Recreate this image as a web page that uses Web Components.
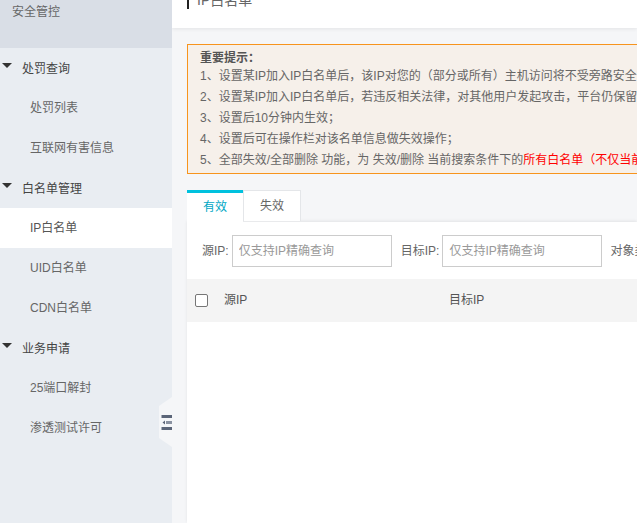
<!DOCTYPE html>
<html lang="zh">
<head>
<meta charset="utf-8">
<title>IP白名单</title>
<style>
    html, body { margin: 0; height: 100%; overflow: hidden; }
    body {
        font: 12px/1.5 "Liberation Sans", "Noto Sans CJK SC", sans-serif;
        color: #666;
    }
</style>
</head>
<body>
<app-shell>
    <side-nav slot="side">
        <nav-item kind="group">处罚查询</nav-item>
        <nav-item>处罚列表</nav-item>
        <nav-item>互联网有害信息</nav-item>
        <nav-item kind="group">白名单管理</nav-item>
        <nav-item active>IP白名单</nav-item>
        <nav-item>UID白名单</nav-item>
        <nav-item>CDN白名单</nav-item>
        <nav-item kind="group">业务申请</nav-item>
        <nav-item>25端口解封</nav-item>
        <nav-item>渗透测试许可</nav-item>
    </side-nav>
    <page-header>IP白名单</page-header>
    <notice-box>
        <p>1、设置某IP加入IP白名单后&#xFF0C;该IP对您的&#xFF08;部分或所有&#xFF09;主机访问将不受旁路安全</p>
        <p>2、设置某IP加入IP白名单后&#xFF0C;若违反相关法律&#xFF0C;对其他用户发起攻击&#xFF0C;平台仍保留</p>
        <p>3、设置后10分钟内生效&#xFF1B;</p>
        <p>4、设置后可在操作栏对该名单信息做失效操作&#xFF1B;</p>
        <p>5、全部失效/全部删除 功能&#xFF0C;为 失效/删除 当前搜索条件下的<span style="color:#f00">所有白名单&#xFF08;不仅当前</span></p>
    </notice-box>
    <tab-bar></tab-bar>
    <list-panel></list-panel>
</app-shell>

<script>
const appShellTemplate = document.createElement("template")
appShellTemplate.innerHTML = `
<style>
    :host { display: flex; width: 100%; height: 100vh; background: #f5f6f8; overflow: hidden; }
    .side { width: 172px; flex: none; }
    .main { flex: 1; min-width: 0; display: flex; flex-direction: column; overflow: hidden; }
</style>
<div class="side"><slot name="side"></slot></div>
<div class="main"><slot></slot></div>`

class AppShell extends HTMLElement {
    constructor() {
        super()
        this.attachShadow({mode: "open"}).append(appShellTemplate.content.cloneNode(true))
    }
}

const sideNavTemplate = document.createElement("template")
sideNavTemplate.innerHTML = `
<style>
    :host { display: block; position: relative; height: 100%; background: #e9edf2; }
    .title { height: 48px; box-sizing: border-box; padding-left: 12px; background: #d9dee6; color: #666; line-height: 24px; }
    .handle { position: absolute; left: 159px; top: 397px; width: 13px; height: 50px; }
    .handle svg { display: block; }
</style>
<div class="title">安全管控</div>
<slot></slot>
<div class="handle">
    <svg width="13" height="50" viewBox="0 0 13 50">
        <polygon points="13,0 13,50 0,41 0,9" fill="#f5f6f8"/>
        <g fill="#5b6578">
            <rect x="2.5" y="18" width="10.5" height="3"/>
            <rect x="2.5" y="30" width="10.5" height="3"/>
        </g>
        <rect x="7" y="24" width="6" height="3" fill="#8a92a1"/>
        <polygon points="3.5,25.5 6,23.5 6,27.5" fill="#5b6578"/>
    </svg>
</div>`

class SideNav extends HTMLElement {
    constructor() {
        super()
        this.attachShadow({mode: "open"}).append(sideNavTemplate.content.cloneNode(true))
    }
}

const navItemTemplate = document.createElement("template")
navItemTemplate.innerHTML = `
<style>
    :host { display: flex; align-items: center; height: 40px; padding-left: 30px; color: #666; }
    :host([active]) { background: #fff; color: #555; }
    :host([kind="group"]) { box-sizing: border-box; padding: 1px 0 0 22px; color: #444; position: relative; }
    .arrow { display: none; position: absolute; left: 2px; top: 15px; width: 0; height: 0;
        border-left: 5px solid transparent; border-right: 5px solid transparent; border-top: 5px solid #333; }
    :host([kind="group"]) .arrow { display: block; }
</style>
<span class="arrow"></span><slot></slot>`

class NavItem extends HTMLElement {
    constructor() {
        super()
        this.attachShadow({mode: "open"}).append(navItemTemplate.content.cloneNode(true))
    }
}

const pageHeaderTemplate = document.createElement("template")
pageHeaderTemplate.innerHTML = `
<style>
    :host { display: block; flex: none; height: 28px; background: #fff; box-shadow: 0 1px 4px rgba(0,0,0,.08); overflow: hidden; position: relative; z-index: 1; }
    h1 { margin: -9px 0 0 15px; padding-left: 8px; border-left: 2px solid #222; font-size: 14px; font-weight: normal; line-height: 18px; color: #666; }
</style>
<h1><slot></slot></h1>`

class PageHeader extends HTMLElement {
    constructor() {
        super()
        this.attachShadow({mode: "open"}).append(pageHeaderTemplate.content.cloneNode(true))
    }
}

const noticeBoxTemplate = document.createElement("template")
noticeBoxTemplate.innerHTML = `
<style>
    :host { display: block; flex: none; box-sizing: border-box; width: 800px; height: 130px; margin: 16px 0 0 15px; padding: 6px 12px 0;
        border: 1px solid #f7941d; background: #f6f0ea; color: #666; white-space: nowrap; }
    strong { display: block; line-height: 15px; color: #555; }
    ::slotted(p) { margin: 0; line-height: 21px; }
</style>
<strong>重要提示&#xFF1A;</strong>
<slot></slot>`

class NoticeBox extends HTMLElement {
    constructor() {
        super()
        this.attachShadow({mode: "open"}).append(noticeBoxTemplate.content.cloneNode(true))
    }
}

const tabBarTemplate = document.createElement("template")
tabBarTemplate.innerHTML = `
<style>
    :host { display: flex; flex: none; margin: 16px 0 0 15px; height: 32px; position: relative; z-index: 1; align-items: flex-start; }
    div { box-sizing: border-box; text-align: center; }
    .on { width: 56px; height: 33px; border-top: 3px solid #00c1de; background: #fff; color: #00a7c4; line-height: 29px; }
    .off { width: 58px; height: 31px; border: 1px solid #e4e6e9; border-bottom: 0; background: #fff; color: #666; line-height: 30px; }
</style>
<div class="on">有效</div>
<div class="off">失效</div>`

class TabBar extends HTMLElement {
    constructor() {
        super()
        this.attachShadow({mode: "open"}).append(tabBarTemplate.content.cloneNode(true))
    }
}

const listPanelTemplate = document.createElement("template")
listPanelTemplate.innerHTML = `
<style>
    :host { display: block; flex: 1; margin-left: 15px; background: #fff; box-shadow: 0 -1px 3px rgba(0,0,0,.08); }
    .filters { display: flex; align-items: center; height: 57px; padding-left: 15px; white-space: nowrap; color: #666; }
    .filters label { display: flex; align-items: center; margin-right: 8px; }
    .filters label:first-child { margin-right: 9px; }
    .filters span { margin-right: 3px; }
    input { width: 160px; height: 32px; box-sizing: border-box; margin: 0; padding: 0 6px; border: 1px solid #ccc; border-radius: 0; outline: 0;
        font: inherit; color: #666; background: #fff; }
    input::placeholder { color: #999; opacity: 1; }
    .head { display: grid; grid-template-columns: 37px 225px 1fr; align-items: center; box-sizing: border-box; height: 43px; padding-bottom: 1px; background: #f4f4f4; color: #555; }
    .box { width: 13px; height: 13px; margin: 1px 0 0 8px; border: 1px solid #767676; border-radius: 2px; box-sizing: border-box; background: #fff; }
</style>
<div class="filters">
    <label><span>源IP:</span><input placeholder="仅支持IP精确查询"></label>
    <label><span>目标IP:</span><input placeholder="仅支持IP精确查询"></label>
    <label><span>对象类型:</span></label>
</div>
<div class="head">
    <div class="box"></div>
    <div>源IP</div>
    <div>目标IP</div>
</div>`

class ListPanel extends HTMLElement {
    constructor() {
        super()
        this.attachShadow({mode: "open"}).append(listPanelTemplate.content.cloneNode(true))
    }
}

customElements.define("app-shell", AppShell)
customElements.define("side-nav", SideNav)
customElements.define("nav-item", NavItem)
customElements.define("page-header", PageHeader)
customElements.define("notice-box", NoticeBox)
customElements.define("tab-bar", TabBar)
customElements.define("list-panel", ListPanel)
</script>
</body>
</html>
